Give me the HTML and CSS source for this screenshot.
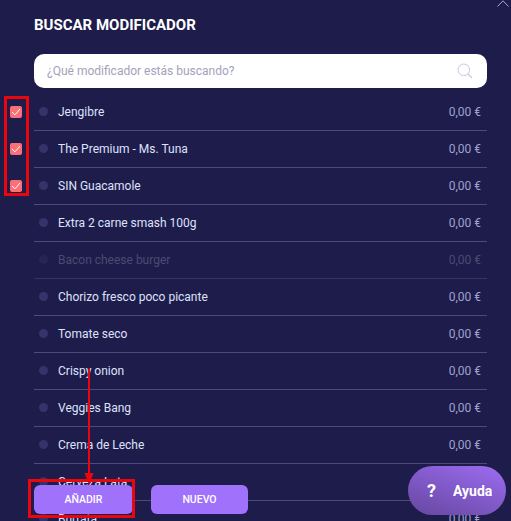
FILE: index.html
```html
<!DOCTYPE html>
<html lang="es">
<head>
<meta charset="utf-8">
<title>Buscar modificador</title>
<link rel="stylesheet" href="styles.css">
</head>
<body>
<main class="modal">
  <svg class="close" width="14" height="8" viewBox="0 0 14 8"><path d="M1.5 6.5 7 .8l5.5 5.7" fill="none" stroke="#a9a8c9" stroke-width="1"/></svg>
  <h1 class="title">BUSCAR MODIFICADOR</h1>
  <div class="search">
    <span class="placeholder">¿Qué modificador estás buscando?</span>
    <svg class="search-icon" width="16" height="16" viewBox="0 0 16 16"><circle cx="6.8" cy="6.8" r="5.8" fill="none" stroke="#c9c8e2" stroke-width="1"/><path d="m11 11 4 4" stroke="#c9c8e2" stroke-width="1.2" fill="none"/></svg>
  </div>
  <ul class="list">
    <li class="row"><span class="box"><svg width="10" height="8" viewBox="0 0 10 8"><path d="m1 4 3 2.8L9 1" fill="none" stroke="#fff" stroke-width="1"/></svg></span><span class="dot"></span><span class="name">Jengibre</span><span class="price">0,00 €</span></li>
    <li class="row"><span class="box"><svg width="10" height="8" viewBox="0 0 10 8"><path d="m1 4 3 2.8L9 1" fill="none" stroke="#fff" stroke-width="1"/></svg></span><span class="dot"></span><span class="name">The Premium - Ms. Tuna</span><span class="price">0,00 €</span></li>
    <li class="row"><span class="box"><svg width="10" height="8" viewBox="0 0 10 8"><path d="m1 4 3 2.8L9 1" fill="none" stroke="#fff" stroke-width="1"/></svg></span><span class="dot"></span><span class="name">SIN Guacamole</span><span class="price">0,00 €</span></li>
    <li class="row"><span class="dot"></span><span class="name">Extra 2 carne smash 100g</span><span class="price">0,00 €</span></li>
    <li class="row row-off"><span class="dot"></span><span class="name">Bacon cheese burger</span><span class="price">0,00 €</span></li>
    <li class="row"><span class="dot"></span><span class="name">Chorizo fresco poco picante</span><span class="price">0,00 €</span></li>
    <li class="row"><span class="dot"></span><span class="name">Tomate seco</span><span class="price">0,00 €</span></li>
    <li class="row"><span class="dot"></span><span class="name">Crispy onion</span><span class="price">0,00 €</span></li>
    <li class="row"><span class="dot"></span><span class="name">Veggies Bang</span><span class="price">0,00 €</span></li>
    <li class="row"><span class="dot"></span><span class="name">Crema de Leche</span><span class="price">0,00 €</span></li>
    <li class="row"><span class="dot"></span><span class="name">Cerveza Lata</span><span class="price">0,00 €</span></li>
    <li class="row"><span class="dot"></span><span class="name">Burrata</span><span class="price">0,00 €</span></li>
  </ul>
  <div class="actions">
    <button class="btn btn-add">AÑADIR</button>
    <button class="btn">NUEVO</button>
  </div>
  <button class="help"><span class="help-q">?</span><span>Ayuda</span></button>
  <div class="mark mark-boxes"></div>
  <div class="mark mark-add"></div>
  <svg class="arrow" width="12" height="118" viewBox="0 0 12 118"><path d="M6 0v108" stroke="#e8060f" stroke-width="2"/><path d="M1.5 104h9L6 116z" fill="#e8060f"/></svg>
</main>
</body>
</html>
```
FILE: styles.css
```css
* { box-sizing: border-box; }
html, body { margin: 0; height: 100%; }
body { background: #1e1c4b; overflow: hidden; font-family: Roboto, "Liberation Sans", sans-serif; }
.modal { position: relative; width: 511px; height: 521px; padding: 16px 24px 0 34px; overflow: hidden; background: #1e1c4b; }
.close { position: absolute; left: 496px; top: 0; }
.title { margin: 0; font-size: 15px; line-height: 18px; font-weight: 700; color: #fff; }
.search { display: flex; align-items: center; justify-content: space-between; height: 34px; margin-top: 20px; padding: 0 6px 0 13px; border-radius: 10px; background: #fff; }
.placeholder { font-size: 12px; color: #a3a2bb; }
.search-icon { margin-right: 8px; }
.list { list-style: none; margin: 6px 0 0; padding: 0; }
.row { position: relative; display: flex; align-items: center; height: 37px; padding: 0 6px 1px 5px; border-bottom: 1px solid #4d4b79; font-size: 12px; color: #dfe2fb; }
.row-off { color: #4c4a70; border-bottom-color: #37355f; }
.box { position: absolute; left: -24px; top: 12px; display: flex; align-items: center; justify-content: center; width: 12px; height: 12px; border-radius: 2px; background: #fb6f78; }
.dot { flex: none; width: 9px; height: 9px; margin-right: 10px; border-radius: 50%; background: #35346a; }
.row-off .dot { background: #272552; }
.name { flex: 1; }
.price { color: #9fa2cf; }
.row-off .price { color: #4c4a70; }
.actions { position: absolute; left: 34px; top: 485px; display: flex; gap: 18px; }
.btn { width: 97px; height: 29px; padding: 0; border: 0; border-radius: 6px; background: #a071fb; color: #fff; font: 500 10.5px Roboto, sans-serif; }
.btn-add { width: 99px; }
.help { position: absolute; left: 408px; top: 466px; display: flex; align-items: center; gap: 17px; width: 98px; height: 49px; padding: 0 0 0 19px; border: 0; border-radius: 25px; background: linear-gradient(20deg, #65479f, #9d6cf2); color: #fff; font: 700 14px Roboto, sans-serif; }
.help-q { font-size: 18px; }
.mark { position: absolute; border: 3px solid #e8060f; }
.mark-boxes { left: 4px; top: 96px; width: 25px; height: 100px; }
.mark-add { left: 28px; top: 479px; width: 107px; height: 39px; }
.arrow { position: absolute; left: 83px; top: 369px; }
```
